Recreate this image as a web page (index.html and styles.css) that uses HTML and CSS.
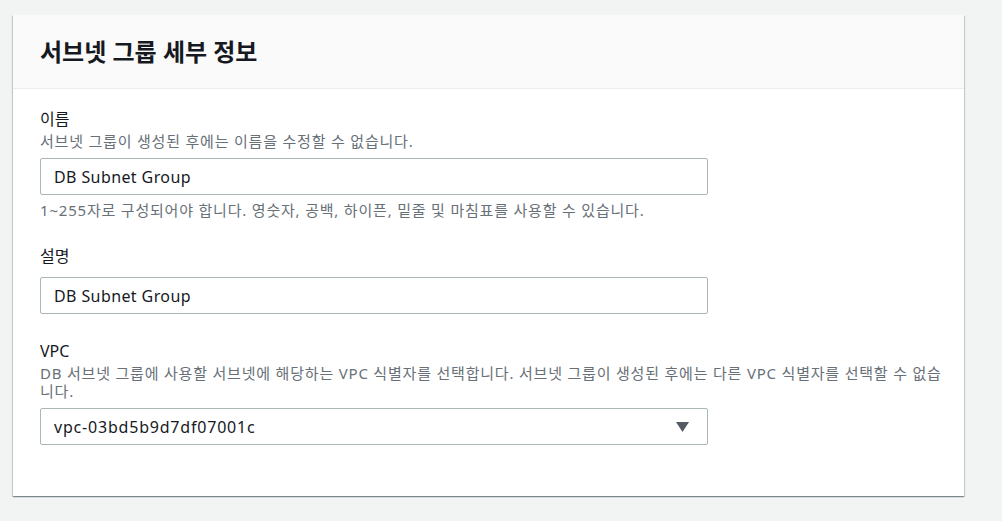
FILE: index.html
```html
<!DOCTYPE html>
<html>
<head>
  <title>DB 서브넷 그룹 생성</title>
  <meta charset="UTF-8">
  <link rel="stylesheet" href="styles.css">
</head>

<body>
  <div class="panel">
    <div class="panel-header">
      <h2>서브넷 그룹 세부 정보</h2>
    </div>

    <div class="panel-body">
      <div class="field">
        <label class="label" for="name">이름</label>
        <div class="desc">서브넷 그룹이 생성된 후에는 이름을 수정할 수 없습니다.</div>
        <input class="text-input" type="text" id="name" value="DB Subnet Group">
        <div class="hint">1~255자로 구성되어야 합니다. 영숫자, 공백, 하이픈, 밑줄 및 마침표를 사용할 수 있습니다.</div>
      </div>

      <div class="field">
        <label class="label" for="description">설명</label>
        <input class="text-input no-desc" type="text" id="description" value="DB Subnet Group">
      </div>

      <div class="field">
        <label class="label">VPC</label>
        <div class="desc">DB 서브넷 그룹에 사용할 서브넷에 해당하는 VPC 식별자를 선택합니다. 서브넷 그룹이 생성된 후에는 다른 VPC 식별자를 선택할 수 없습니다.</div>
        <div class="select">
          <span class="select-value">vpc-03bd5b9d7df07001c</span>
          <svg width="13" height="10" viewBox="0 0 13 10"><path d="M0 0 H13 L6.5 10 Z" fill="#545b64"/></svg>
        </div>
      </div>
    </div>
  </div>
</body>
</html>
```

FILE: styles.css
```css
body {
  margin: 0;
  padding: 15px 38px 25px 13px;
  background-color: #f2f3f3;
  font-family: "Noto Sans", "Noto Sans CJK KR", sans-serif;
  color: #16191f;
}
.panel {
  background-color: #fff;
  box-shadow: 0 1px 1px 0 rgba(0,28,36,0.3), 1px 1px 1px 0 rgba(0,28,36,0.15), -1px 1px 1px 0 rgba(0,28,36,0.15);
}
.panel-header {
  background-color: #fafafa;
  border-bottom: 1px solid #eaeded;
  height: 73px;
  padding: 0 24px 0 27px;
  display: flex;
  align-items: center;
}
.panel-header h2 {
  margin: 0;
  font-size: 24px;
  font-weight: 700;
  line-height: 30px;
}
.panel-body {
  padding: 19px 20px 51px 27px;
}
.field {
  margin-bottom: 26px;
}
.field:last-child {
  margin-bottom: 0;
}
.label {
  display: block;
  font-size: 16px;
  line-height: 22px;
}
.desc, .hint {
  font-size: 15px;
  line-height: 18px;
  letter-spacing: 0.8px;
  color: #687078;
}
.desc {
  margin-top: 2px;
}
.hint {
  margin-top: 6px;
}
.text-input, .select {
  box-sizing: border-box;
  width: 668px;
  height: 37px;
  margin: 8px 0 0;
  border: 1px solid #aab7b8;
  border-radius: 2px;
  padding: 0 13px;
  font-family: inherit;
  font-size: 16px;
  letter-spacing: 0.4px;
  color: #16191f;
  background-color: #fff;
}
.text-input.no-desc {
  margin-top: 10px;
}
.select {
  display: flex;
  align-items: center;
  justify-content: space-between;
  padding-right: 18px;
}
.select-value {
  letter-spacing: 0.8px;
}
```
